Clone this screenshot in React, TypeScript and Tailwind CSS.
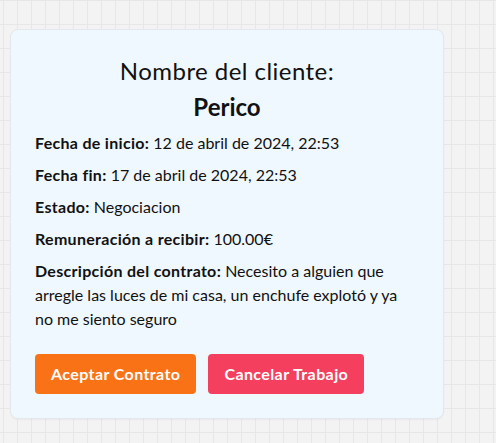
const contrato = {
  cliente: "Perico",
  inicio: "12 de abril de 2024, 22:53",
  fin: "17 de abril de 2024, 22:53",
  estado: "Negociacion",
  remuneracion: "100.00€",
  descripcion: "Necesito a alguien que arregle las luces de mi casa, un enchufe explotó y ya no me siento seguro",
};

function Dato({ label, children }: { label: string; children: React.ReactNode }) {
  return (
    <p className="mb-2 text-base leading-6">
      <strong className="font-bold tracking-[0.3px]">{label}:</strong> {children}
    </p>
  );
}

export default function App() {
  return (
    <div
      className="min-h-screen bg-[#f3f3f3] bg-[linear-gradient(to_right,#e7e7e7_1px,transparent_1px),linear-gradient(to_bottom,#e7e7e7_1px,transparent_1px)] bg-[size:14px_24px] bg-[position:3px_0] pl-[10px] pt-[29px] text-[#111] font-['Lato','Noto_Sans',sans-serif]"
    >
      <div className="w-[434px] rounded-lg border border-[#e3e8ee] bg-[#f0f8ff] px-6 pb-6 pt-[22px] shadow-[0_1px_2px_rgba(0,0,0,0.04)]">
        <h2 className="text-center text-2xl leading-[38px] tracking-[0.45px]">Nombre del cliente:</h2>
        <h3 className="mb-[7px] text-center text-2xl font-bold leading-[34px]">{contrato.cliente}</h3>
        <Dato label="Fecha de inicio">{contrato.inicio}</Dato>
        <Dato label="Fecha fin">{contrato.fin}</Dato>
        <Dato label="Estado">{contrato.estado}</Dato>
        <Dato label="Remuneración a recibir">{contrato.remuneracion}</Dato>
        <Dato label="Descripción del contrato">{contrato.descripcion}</Dato>
        <div className="mt-[23px] flex gap-3">
          <button className="h-10 rounded bg-[#f97316] px-4 font-bold tracking-[0.4px] text-white">Aceptar Contrato</button>
          <button className="h-10 rounded bg-[#f43f5e] px-4 font-bold tracking-[0.4px] text-white">Cancelar Trabajo</button>
        </div>
      </div>
    </div>
  );
}
